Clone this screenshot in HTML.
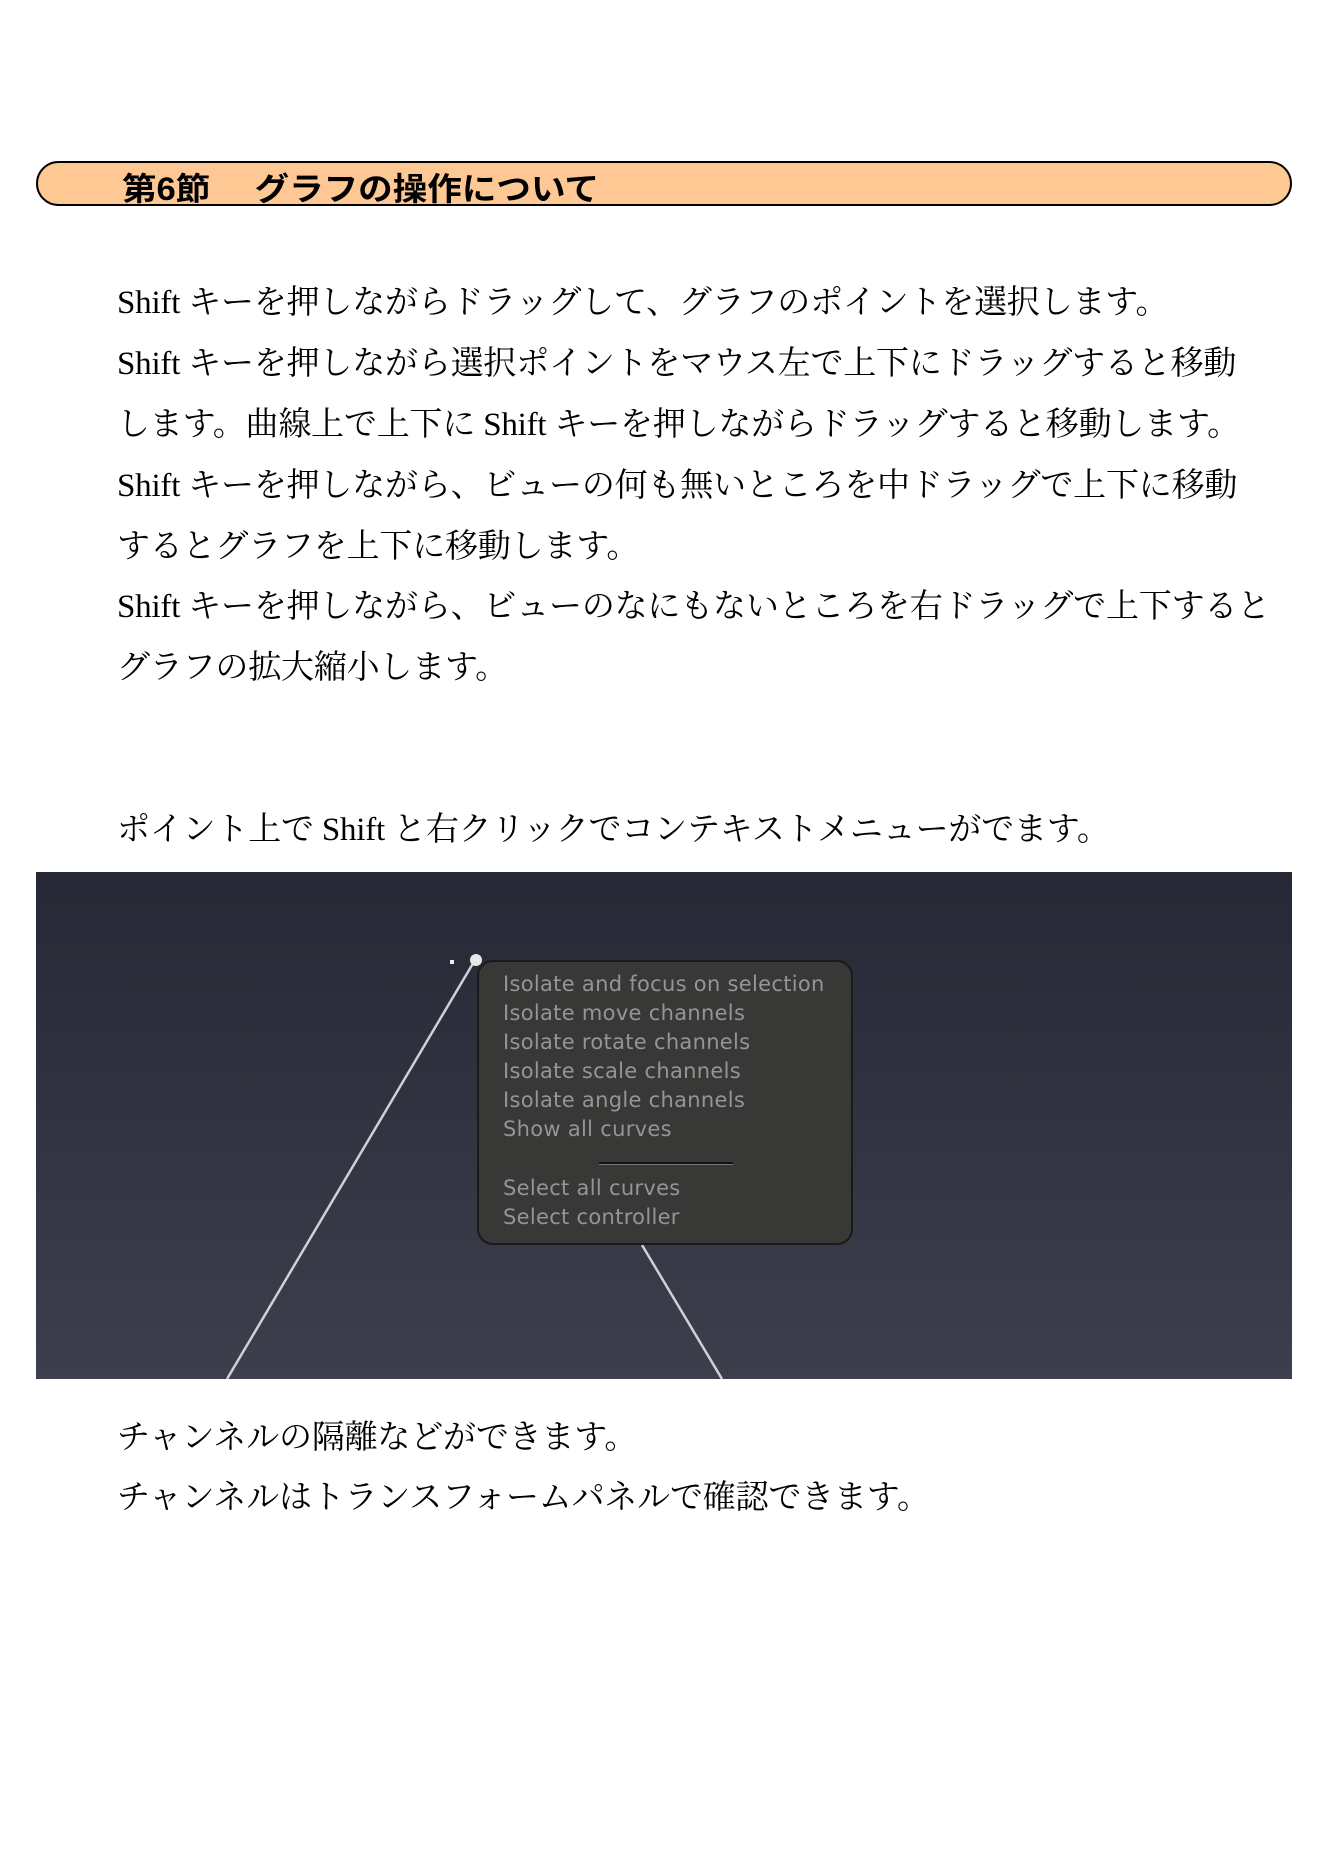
<!DOCTYPE html>
<html><head><meta charset="utf-8"><style>
html,body{margin:0;padding:0;background:#fff;}
body{width:1328px;height:1875px;position:relative;overflow:hidden;}
.hdr{position:absolute;left:36px;top:161px;width:1256px;height:45px;background:#fec894;border:2px solid #000;border-radius:23px;box-sizing:border-box;}
.hdr span{position:absolute;left:84px;top:1px;line-height:40px;font:bold 32px "Liberation Sans","Noto Sans CJK JP",sans-serif;transform:scaleX(1.08);transform-origin:left;}
.t{position:absolute;left:117px;font-family:"Liberation Serif","Noto Serif CJK JP",serif;font-size:33px;letter-spacing:-0.2px;line-height:40px;white-space:nowrap;color:#000;}
.img{position:absolute;left:36px;top:872px;width:1256px;height:507px;background:linear-gradient(#262835,#3d3f4d);overflow:hidden;}
.menu{position:absolute;left:441px;top:88px;width:376px;height:285px;background:#383836;border:2px solid #1a1a1a;border-radius:16px;box-sizing:border-box;}
.m{position:absolute;left:24px;font:21px "DejaVu Sans",sans-serif;letter-spacing:0.3px;color:#959595;white-space:nowrap;}
</style></head><body>
<div class="hdr"><span>第6節　 グラフの操作について</span></div>
<div class="t" style="top:283px">Shift キーを押しながらドラッグして、グラフのポイントを選択します。</div>
<div class="t" style="top:344px">Shift キーを押しながら選択ポイントをマウス左で上下にドラッグすると移動</div>
<div class="t" style="top:405px">します。曲線上で上下に Shift キーを押しながらドラッグすると移動します。</div>
<div class="t" style="top:466px">Shift キーを押しながら、ビューの何も無いところを中ドラッグで上下に移動</div>
<div class="t" style="top:527px">するとグラフを上下に移動します。</div>
<div class="t" style="top:587px">Shift キーを押しながら、ビューのなにもないところを右ドラッグで上下すると</div>
<div class="t" style="top:648px">グラフの拡大縮小します。</div>
<div class="t" style="top:810px">ポイント上で Shift と右クリックでコンテキストメニューがでます。</div>
<div class="img">
<svg width="1256" height="507" style="position:absolute;left:0;top:0">
<line x1="439" y1="88" x2="191" y2="507" stroke="#d0d0d8" stroke-width="2.5"/>
<line x1="606" y1="373" x2="686" y2="507" stroke="#d0d0d8" stroke-width="2.5"/>
<circle cx="440" cy="88" r="6" fill="#e8e8e8"/>
<rect x="414" y="88" width="4" height="4" fill="#eee"/>
</svg>
<div class="menu">
<div class="m" style="top:10px">Isolate and focus on selection</div>
<div class="m" style="top:39px">Isolate move channels</div>
<div class="m" style="top:68px">Isolate rotate channels</div>
<div class="m" style="top:97px">Isolate scale channels</div>
<div class="m" style="top:126px">Isolate angle channels</div>
<div class="m" style="top:155px">Show all curves</div>
<div style="position:absolute;left:120px;top:200px;width:134px;height:2px;background:#111;border-bottom:1px solid #777"></div>
<div class="m" style="top:214px">Select all curves</div>
<div class="m" style="top:243px">Select controller</div>
</div>
</div>
<div class="t" style="top:1418px">チャンネルの隔離などができます。</div>
<div class="t" style="top:1478px">チャンネルはトランスフォームパネルで確認できます。</div>
</body></html>
